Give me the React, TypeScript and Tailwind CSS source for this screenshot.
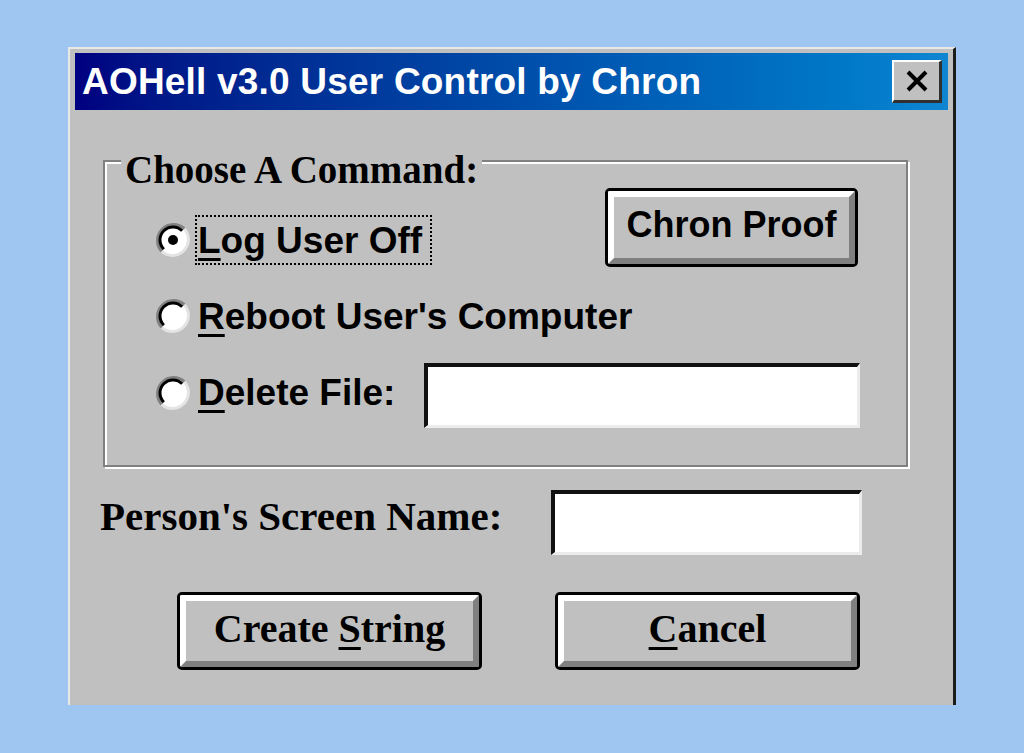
import React from "react";

const sans = "font-['Liberation_Sans',Arial,sans-serif] font-bold";
const serif = "font-['Liberation_Serif','Times_New_Roman',serif] font-bold";

function Radio({ checked }: { checked?: boolean }) {
  return (
    <svg width="36" height="36" viewBox="0 0 36 36" className="shrink-0">
      <circle cx="18" cy="18" r="16" fill="#fff" />
      <path d="M29.3 6.7 A16 16 0 0 1 6.7 29.3" fill="none" stroke="#e4e4e4" strokeWidth="3" />
      <path d="M6.7 29.3 A16 16 0 0 1 29.3 6.7" fill="none" stroke="#808080" strokeWidth="3" />
      <path d="M8.8 27.2 A13 13 0 0 1 27.2 8.8" fill="none" stroke="#000" strokeWidth="3" />
      {checked && <circle cx="18" cy="18" r="5" fill="#000" />}
    </svg>
  );
}

function WinButton({ children, className = "" }: { children: React.ReactNode; className?: string }) {
  return (
    <button className={`shrink-0 border-[3px] border-black rounded-[5px] bg-[#c0c0c0] p-0 ${className}`}>
      <span className="flex h-full w-full items-center justify-center border-[6px] border-t-white border-l-white border-r-[#808080] border-b-[#808080] rounded-[2px] text-black whitespace-nowrap">
        {children}
      </span>
    </button>
  );
}

function TextBox({ className = "" }: { className?: string }) {
  return (
    <div
      className={`shrink-0 bg-white border-t-[4px] border-l-[4px] border-t-[#111] border-l-[#111] border-b-[3px] border-r-[3px] border-b-[#ececec] border-r-[#ececec] ${className}`}
    />
  );
}

function U({ children }: { children: React.ReactNode }) {
  return <span className="underline underline-offset-[5px] decoration-[3px]">{children}</span>;
}

export default function App() {
  return (
    <div className="w-[1024px] h-[753px] bg-[#9fc6f0] pl-[68px] pt-[47px] overflow-hidden">
      <div className="w-[888px] h-[658px] bg-[#c0c0c0] border-l-2 border-t-2 border-l-[#e8e8e8] border-t-[#e8e8e8] border-r-[3px] border-r-[#1c1c1c] pt-[4px] pl-[5px] pr-[5px]">
        {/* title bar */}
        <div className="h-[57px] flex items-center justify-between bg-gradient-to-r from-[#000080] to-[#1086d2] pl-[7px] pr-[6px]">
          <span className={`${sans} text-white text-[37px] leading-none tracking-[0.2px] whitespace-nowrap`}>
            AOHell v3.0 User Control by Chron
          </span>
          <div className="w-[50px] h-[43px] bg-[#c0c0c0] border-t-2 border-l-2 border-white border-b-[3px] border-r-[3px] border-b-[#303030] border-r-[#303030] flex items-center justify-center">
            <svg width="24" height="22" viewBox="0 0 24 22">
              <path d="M3 2 L21 20 M21 2 L3 20" stroke="#000" strokeWidth="4" />
            </svg>
          </div>
        </div>

        <div className="ml-[28px] mr-[40px] mt-[50px]">
          {/* group box */}
          <div className="relative h-[307px] border-2 border-[#808080] shadow-[inset_2px_2px_0_#fff,2px_2px_0_#fff] pl-[50px] pr-[48px] pt-[26px]">
            <span className={`${serif} absolute left-[16px] top-[-12px] bg-[#c0c0c0] px-[4px] text-[39px] leading-none text-black whitespace-nowrap`}>
              Choose A Command:
            </span>
            <div className="flex">
              <div className="mt-[27px] w-[400px] flex flex-col gap-[26px]">
                <div className="flex items-center gap-[4px] h-[50px]">
                  <Radio checked />
                  <div className="h-[50px] flex items-center pl-[1px] pr-[8px] border-2 border-dotted border-black">
                    <span className={`${sans} text-[37px] leading-none whitespace-nowrap`}>
                      <U>L</U>og User Off
                    </span>
                  </div>
                </div>
                <div className="flex items-center gap-[4px] h-[50px]">
                  <Radio />
                  <div className="h-[50px] flex items-center pl-[1px] border-2 border-transparent">
                    <span className={`${sans} text-[37px] leading-none whitespace-nowrap`}>
                      <U>R</U>eboot User's Computer
                    </span>
                  </div>
                </div>
              </div>
              <WinButton className="ml-auto w-[253px] h-[79px]">
                <span className={`${sans} text-[36px] leading-none pb-[6px]`}>Chron Proof</span>
              </WinButton>
            </div>
            <div className="mt-[22px] h-[65px] flex items-center">
              <div className="flex items-center gap-[4px] mb-[6px]">
                <Radio />
                <div className="flex items-center pl-[1px] border-2 border-transparent">
                  <span className={`${sans} text-[37px] leading-none whitespace-nowrap`}>
                    <U>D</U>elete File:
                  </span>
                </div>
              </div>
              <TextBox className="ml-auto w-[436px] h-[65px] mr-[-2px]" />
            </div>
          </div>

          {/* screen name */}
          <div className="mt-[23px] ml-[-3px] mr-[48px] flex items-center">
            <span className={`${serif} text-[41px] leading-none text-black mb-[12px] whitespace-nowrap`}>
              Person's Screen Name:
            </span>
            <TextBox className="ml-auto w-[311px] h-[65px] mr-[-2px]" />
          </div>

          {/* buttons */}
          <div className="mt-[37px] pl-[74px] mr-[48px] flex">
            <WinButton className="w-[305px] h-[78px]">
              <span className={`${serif} text-[40px] leading-none pb-[4px]`}>
                Create <U>S</U>tring
              </span>
            </WinButton>
            <WinButton className="ml-auto w-[305px] h-[78px]">
              <span className={`${serif} text-[40px] leading-none pb-[4px]`}>
                <U>C</U>ancel
              </span>
            </WinButton>
          </div>
        </div>
      </div>
    </div>
  );
}
